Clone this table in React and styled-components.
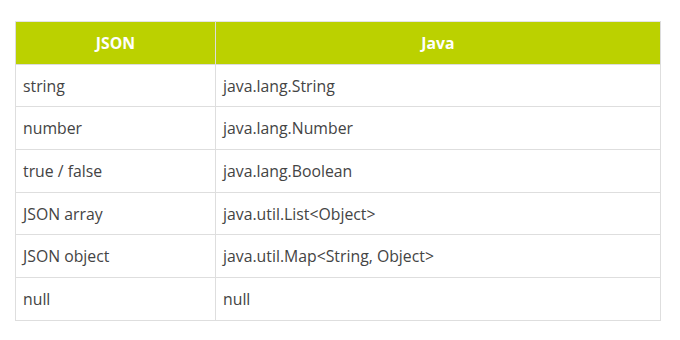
import React from 'react';
import styled, { createGlobalStyle } from 'styled-components';

const ROWS = [
    ['string', 'java.lang.String'],
    ['number', 'java.lang.Number'],
    ['true / false', 'java.lang.Boolean'],
    ['JSON array', 'java.util.List<Object>'],
    ['JSON object', 'java.util.Map<String, Object>'],
    ['null', 'null'],
];

const GlobalStyle = createGlobalStyle`
    html, body {
        margin: 0;
        background: #fff;
    }
`;

const Page = styled.div`
    padding: 21px 19px 0 15px;
    font-family: 'Open Sans', 'Liberation Sans', sans-serif;
`;

const Table = styled.table`
    width: 646px;
    border-collapse: collapse;
    table-layout: fixed;
    font-size: 15.8px;
    color: #444;
`;

const HeadCell = styled.th`
    height: 41.7px;
    padding: 0 7px;
    background: #bbd100;
    color: #fff;
    font-weight: 700;
    text-align: center;
    border: 1px solid #dcdcdc;
    border-top-color: #e4e4e4;
`;

const Cell = styled.td`
    height: 41.7px;
    padding: 0 7px;
    border: 1px solid #dedede;
`;

export default function App() {
    return (
        <Page>
            <GlobalStyle />
            <Table>
                <colgroup>
                    <col style={{ width: 200 }} />
                    <col />
                </colgroup>
                <thead>
                    <tr>
                        <HeadCell>JSON</HeadCell>
                        <HeadCell>Java</HeadCell>
                    </tr>
                </thead>
                <tbody>
                    {ROWS.map(([json, java]) => (
                        <tr key={json}>
                            <Cell>{json}</Cell>
                            <Cell>{java}</Cell>
                        </tr>
                    ))}
                </tbody>
            </Table>
        </Page>
    );
}
